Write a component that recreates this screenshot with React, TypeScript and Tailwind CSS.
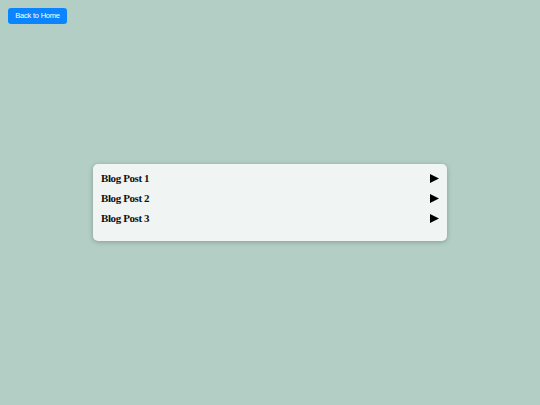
export default function App() {
  const posts = ["Blog Post 1", "Blog Post 2", "Blog Post 3"];
  return (
    <main className="relative h-[405px] w-[540px] bg-[#b3cfc5] flex items-center justify-center">
      <button className="absolute left-2 top-2 h-4 w-[59px] rounded-[3px] bg-[#0a84ff] text-center text-white text-[7.5px] leading-4 tracking-[-0.2px] font-['Liberation_Sans',sans-serif]">
        Back to Home
      </button>
      <div className="w-[354px] rounded-[5px] bg-[#f0f4f3] px-2 pt-2 pb-[9px] shadow-[0_1px_5px_rgba(0,0,0,0.25)]">
        {posts.map((p) => (
          <div key={p} className="mb-2 flex h-3 items-center justify-between">
            <span className="font-['Liberation_Serif',serif] text-[11px] font-bold leading-3 tracking-[-0.4px] text-[#111]">{p}</span>
            <svg width="9" height="9" viewBox="0 0 9 9">
              <polygon points="0,0 9,4.5 0,9" fill="#000" />
            </svg>
          </div>
        ))}
      </div>
    </main>
  );
}
